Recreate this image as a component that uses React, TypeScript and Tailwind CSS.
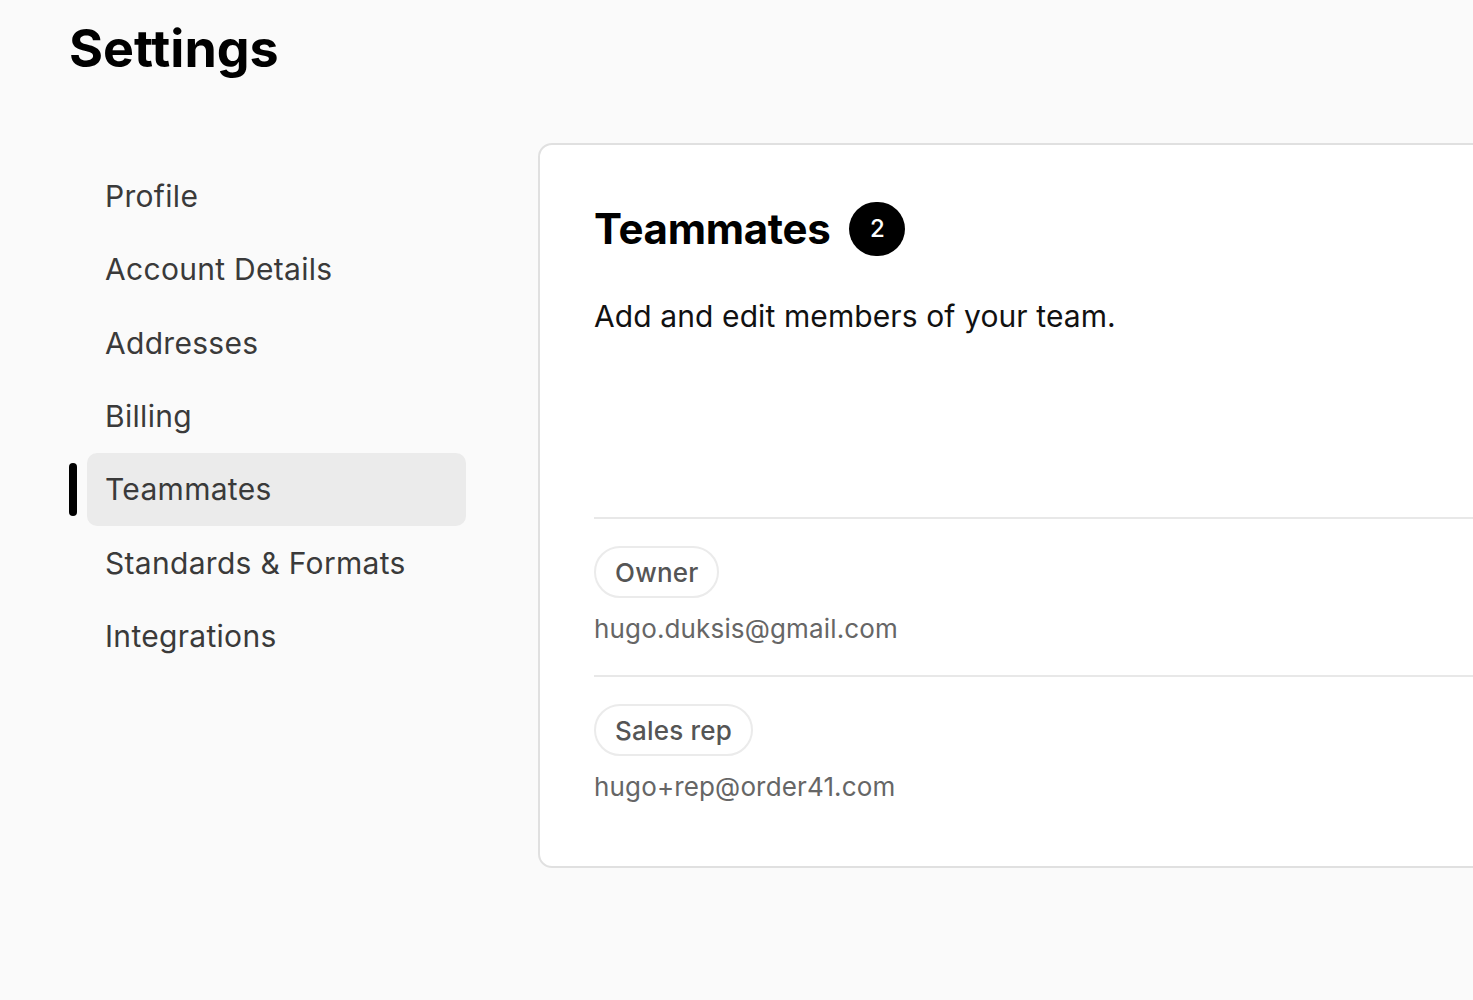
const NAV = [
  'Profile',
  'Account Details',
  'Addresses',
  'Billing',
  'Teammates',
  'Standards & Formats',
  'Integrations',
];

const MEMBERS = [
  { role: 'Owner', email: 'hugo.duksis@gmail.com' },
  { role: 'Sales rep', email: 'hugo+rep@order41.com' },
];

export default function App() {
  const active = 'Teammates';

  return (
    <div
      className="w-[1473px] h-[1000px] overflow-hidden bg-[#fafafa] px-[69px] pt-[23px]"
      style={{ fontFamily: 'Inter, "Noto Sans", sans-serif' }}
    >
      <h1 className="text-[52px] leading-none font-bold text-black">Settings</h1>

      <div className="flex items-start mt-[68px]">
        {/* sidebar */}
        <nav className="shrink-0 w-[397px] pt-[17px] flex flex-col">
          {NAV.map((item) => {
            const on = item === active;
            return (
              <div key={item} className="flex items-center h-[73.33px]">
                <div
                  className={
                    on
                      ? 'w-[8px] h-[53px] rounded-full bg-black mr-[10px]'
                      : 'w-[8px] h-[53px] mr-[10px]'
                  }
                />
                <div
                  className={
                    on
                      ? 'w-[379px] h-[73px] rounded-[10px] bg-[#ebebeb] flex items-center pl-[18px] text-[30px] tracking-[0.3px] text-[#3a3a3a]'
                      : 'w-[379px] h-[73px] rounded-[10px] flex items-center pl-[18px] text-[30px] tracking-[0.3px] text-[#3a3a3a]'
                  }
                >
                  {item}
                </div>
              </div>
            );
          })}
        </nav>

        {/* card */}
        <section className="shrink-0 ml-[72px] w-[1000px] bg-white border-2 border-[#e0e0e0] rounded-[14px] pl-[54px] pt-[57px] pb-[33px]">
          <div className="flex items-center h-[54px]">
            <h2 className="text-[42px] leading-none font-bold text-black tracking-[-0.3px]">
              Teammates
            </h2>
            <span className="ml-[19px] w-[56px] h-[54px] rounded-full bg-black text-white flex items-center justify-center text-[24px] font-medium">
              2
            </span>
          </div>

          <p className="mt-[45px] text-[30px] leading-none tracking-[0.1px] text-[#111]">
            Add and edit members of your team.
          </p>

          <div className="mt-[186px]">
            {MEMBERS.map((m) => (
              <div key={m.email} className="border-t-2 border-[#e8e8e8] pt-[27px] pb-[33px]">
                <span className="inline-flex items-center h-[52px] px-[19px] rounded-full border-2 border-[#ebebeb] text-[26px] font-medium tracking-[0.2px] text-[#555]">
                  {m.role}
                </span>
                <div className="mt-[18px] text-[26px] leading-none tracking-[0.15px] text-[#666]">
                  {m.email}
                </div>
              </div>
            ))}
          </div>
        </section>
      </div>
    </div>
  );
}
